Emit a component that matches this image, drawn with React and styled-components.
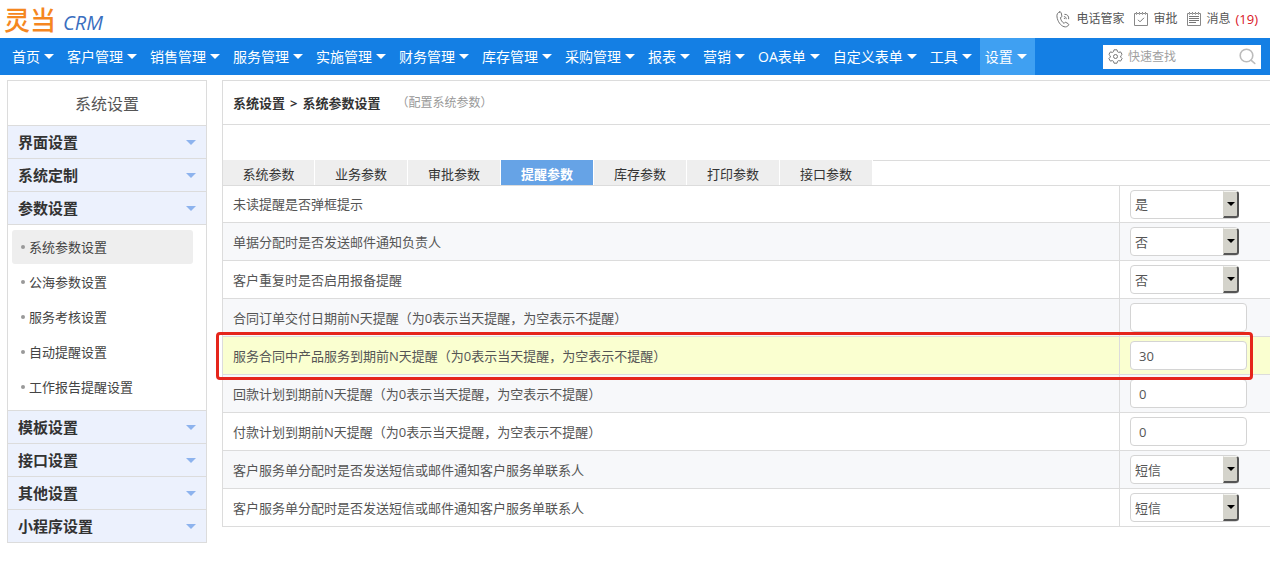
import React from "react";
import styled, { createGlobalStyle, css } from "styled-components";

const GlobalStyle = createGlobalStyle`
  *, *::before, *::after { box-sizing: border-box; }
  body {
    margin: 0;
    background: #fff;
    color: #555;
    font: 13px/20px "Open Sans", "Noto Sans CJK SC", sans-serif;
  }
  button, input, select { font: inherit; color: inherit; }
  a { color: inherit; text-decoration: none; }
`;

const line = "#dcdcdc";

const TopBar = styled.header`
  display: flex;
  align-items: center;
  justify-content: space-between;
  height: 38px;
  padding: 0 12px 0 4px;
`;

const Logo = styled.a`
  display: flex;
  align-items: baseline;
  height: 38px;
  font-size: 26px;
  line-height: 38px;
  font-weight: 500;
  font-family: "Noto Sans CJK SC", sans-serif;
  color: #f5871f;
`;

const LogoMark = styled.span`
  margin-left: 7px;
  font: italic 20px/20px "Open Sans", sans-serif;
  color: #3a6fc0;
`;

const QuickLinks = styled.nav`
  display: flex;
  gap: 10px;
  font-size: 12px;
`;

const QuickLink = styled.a`
  display: flex;
  align-items: center;
  gap: 5px;
`;

const Count = styled.span`
  font-size: 13px;
  color: #d9141e;
`;

const NavBar = styled.nav`
  display: flex;
  align-items: center;
  height: 37px;
  padding: 0 9px 0 7px;
  background: #147fe4;
`;

const NavItem = styled.button`
  display: flex;
  align-items: center;
  gap: 4px;
  height: 37px;
  padding: 0 8px 0 5px;
  border: 0;
  background: ${(p) => (p.$active ? "#3fa0f2" : "transparent")};
  color: #fff;
  font-size: 14px;
  line-height: 20px;
  white-space: nowrap;
`;

const Caret = styled.span`
  width: 0;
  height: 0;
  border: 5px solid transparent;
  border-bottom-width: 0;
  border-top-color: ${(p) => p.$color || "#fff"};
`;

const Search = styled.label`
  display: flex;
  align-items: center;
  gap: 5px;
  width: 158px;
  height: 24px;
  margin-left: auto;
  padding: 0 5px;
  background: #fff;
`;

const SearchInput = styled.input`
  flex: 1;
  min-width: 0;
  padding: 0;
  border: 0;
  outline: 0;
  background: none;
  font-size: 12px;
  &::placeholder { color: #a0a0a0; opacity: 1; }
`;

const Page = styled.div`
  display: flex;
  align-items: flex-start;
  gap: 15px;
  padding: 5px 0 19px 7px;
`;

const Sidebar = styled.aside`
  flex: 0 0 200px;
  border: 1px solid ${line};
`;

const SideTitle = styled.h1`
  margin: 0;
  padding: 13px 0 11px;
  font-size: 16px;
  line-height: 20px;
  font-weight: 400;
  text-align: center;
`;

const SideGroup = styled.button`
  display: flex;
  align-items: center;
  justify-content: space-between;
  width: 100%;
  height: 33px;
  padding: 0 10px;
  border: 0;
  border-top: 1px solid ${line};
  background: #ecf1fd;
  color: #333;
  font-size: 15px;
  line-height: 20px;
  font-weight: 700;
`;

const SubMenu = styled.ul`
  display: grid;
  gap: 1px;
  margin: 0;
  padding: 5px 13px 6px 4px;
  border-top: 1px solid ${line};
  list-style: none;
`;

const SubLink = styled.a`
  display: flex;
  align-items: center;
  gap: 4px;
  height: 34px;
  padding: 0 9px;
  border-radius: 3px;
  background: ${(p) => (p.$active ? "#eee" : "transparent")};
  color: #444;
  &::before {
    content: "";
    width: 4px;
    height: 4px;
    border-radius: 2px;
    background: #999;
  }
`;

const Main = styled.main`
  flex: 1;
  min-width: 0;
  border: solid ${line};
  border-width: 1px 0 0 1px;
`;

const Crumbs = styled.div`
  display: flex;
  align-items: center;
  gap: 5px;
  height: 44px;
  padding: 0 10px;
  border-bottom: 1px solid ${line};
  color: #333;
  font-weight: 700;
`;

const Hint = styled.span`
  margin-left: 11px;
  color: #999;
  font-size: 12px;
  font-weight: 400;
`;

const TabBar = styled.div`
  display: flex;
  margin-top: 35px;
  &::after {
    content: "";
    flex: 1;
    border-top: 1px solid ${line};
  }
`;

const Tab = styled.button`
  width: 93px;
  height: 25px;
  padding: 2px 0 0;
  border: 0;
  border-right: 1px solid #fff;
  background: #eee;
  color: #333;
  &:first-child { width: 92px; }
  ${(p) => p.$active && css`
    background: #66a3e6;
    color: #fff;
    font-weight: 700;
  `}
`;

const Settings = styled.table`
  width: 100%;
  border-collapse: separate;
  border-spacing: 0;
`;

const rowColor = (p) => (p.$marked ? "#faffd0" : p.$striped ? "#f7f8fa" : "#fff");

const Row = styled.tr`
  position: relative;
  background: ${rowColor};
  &:first-child > * { border-top: 1px solid ${line}; }
`;

const NameCell = styled.th`
  height: 38px;
  padding: 0 10px;
  border-bottom: 1px solid ${line};
  font-weight: 400;
  text-align: left;
`;

const ValueCell = styled.td`
  width: 151px;
  height: 38px;
  padding: 0 10px;
  border: solid ${line};
  border-width: 0 0 1px 1px;
`;

const field = css`
  display: block;
  height: 29px;
  border: 1px solid #d4d4d4;
  border-radius: 4px;
  background: #fff;
  color: #555;
`;

const TextField = styled.input`
  ${field}
  width: 117px;
  padding: 0 8px;
`;

const SelectBox = styled.div`
  position: relative;
  width: 109px;
`;

const SelectField = styled.select`
  ${field}
  width: 100%;
  padding: 0 20px 0 4px;
  appearance: none;
`;

const SelectArrow = styled.span`
  position: absolute;
  top: 1px;
  right: 0;
  bottom: 1px;
  display: grid;
  place-items: center;
  width: 16px;
  border: solid;
  border-width: 1px 2px 2px 1px;
  border-color: #f4f4f0 #555 #555 #d4d3cb;
  border-radius: 0 3px 3px 0;
  background: #d4d3cb;
  pointer-events: none;
  &::before {
    content: "";
    border: 4px solid transparent;
    border-top-color: #000;
    border-bottom-width: 0;
  }
`;

const Marker = styled.span`
  position: absolute;
  z-index: 1;
  inset: -5px 17px -5px -7px;
  border: 3px solid #e5251b;
  border-radius: 4px;
  pointer-events: none;
`;

const Icon = styled.svg`
  flex: none;
  fill: none;
  stroke: ${(p) => p.$color || "#777"};
`;

const PhoneIcon = () => (
  <Icon width="15" height="17" viewBox="0 0 15 17" strokeLinecap="round" strokeLinejoin="round">
    <path d="M3.500 1C1.500 1.600.6 3.400 1 6c.7 4.500 3.500 8.600 7 9.700 2 .600 3.800-.200 4.600-1.700.3-.6.1-1-.4-1.300l-2.300-1.300c-.6-.3-1-.1-1.300.3l-.5.7C6 11.200 4.700 8.800 4.400 6.500l.9-.3c.5-.2.7-.5.6-1.100L5.200 1.800C5 1.100 4.400.8 3.500 1Z" />
    <path d="M8.300 5.600c1.200 0 2 .9 1.900 2.200M8.800 3.300c2.400-.2 4.300 1.800 3.900 4.500M8.300 7.300l.2.400" />
  </Icon>
);

const NotepadFrame = () => (
  <>
    <path d="M.5 1.500h13v12H.5Z" stroke="#888" />
    <path d="M2.500 0v1M5.500 0v1M8.500 0v1M11.500 0v1" stroke="#888" />
    <path d="M2.500 1v2M5.500 1v2M8.500 1v2M11.500 1v2" stroke="#aaa" />
  </>
);

const ApproveIcon = () => (
  <Icon width="14" height="14" viewBox="0 0 14 14">
    <NotepadFrame />
    <path d="M4 7.800l2 2 4-4" />
  </Icon>
);

const MessageIcon = () => (
  <Icon width="14" height="14" viewBox="0 0 14 14">
    <NotepadFrame />
    <path d="M2 4.500h10M2 6.500h10M2 8.500h10M2 10.500h7" />
  </Icon>
);

const GearIcon = () => (
  <Icon width="15" height="15" viewBox="0 0 15 15" strokeLinejoin="round">
    <path d="M6 .8h3l.5 1.900 1.200.7 1.900-.5 1.500 2.600-1.400 1.400v1.200l1.400 1.400-1.500 2.600-1.900-.5-1.200.7-.5 1.900H6l-.5-1.900-1.200-.7-1.900.5L.9 9.500l1.400-1.400V6.900L.9 5.500l1.500-2.600 1.900.5 1.200-.7Z" />
    <circle cx="7.500" cy="7.500" r="2" />
  </Icon>
);

const LensIcon = () => (
  <Icon $color="#bbb" width="17" height="17" viewBox="0 0 17 17" strokeWidth="1.600" strokeLinecap="round">
    <circle cx="7.500" cy="7.500" r="6.300" />
    <path d="M12.300 12.300l3.500 3.200" />
  </Icon>
);

const menus = ["首页", "客户管理", "销售管理", "服务管理", "实施管理", "财务管理", "库存管理", "采购管理", "报表", "营销", "OA表单", "自定义表单", "工具", "设置"];

const groups = [
  { name: "界面设置" },
  { name: "系统定制" },
  { name: "参数设置", links: ["系统参数设置", "公海参数设置", "服务考核设置", "自动提醒设置", "工作报告提醒设置"] },
  { name: "模板设置" },
  { name: "接口设置" },
  { name: "其他设置" },
  { name: "小程序设置" },
];

const tabs = ["系统参数", "业务参数", "审批参数", "提醒参数", "库存参数", "打印参数", "接口参数"];

const settings = [
  { name: "未读提醒是否弹框提示", value: "是", options: ["是", "否"] },
  { name: "单据分配时是否发送邮件通知负责人", value: "否", options: ["是", "否"] },
  { name: "客户重复时是否启用报备提醒", value: "否", options: ["是", "否"] },
  { name: "合同订单交付日期前N天提醒（为0表示当天提醒，为空表示不提醒）", value: "" },
  { name: "服务合同中产品服务到期前N天提醒（为0表示当天提醒，为空表示不提醒）", value: "30", marked: true },
  { name: "回款计划到期前N天提醒（为0表示当天提醒，为空表示不提醒）", value: "0" },
  { name: "付款计划到期前N天提醒（为0表示当天提醒，为空表示不提醒）", value: "0" },
  { name: "客户服务单分配时是否发送短信或邮件通知客户服务单联系人", value: "短信", options: ["短信", "邮件"] },
  { name: "客户服务单分配时是否发送短信或邮件通知客户服务单联系人", value: "短信", options: ["短信", "邮件"] },
];

function SettingRow({ item, index }) {
  const id = `setting-${index}`;
  return (
    <Row $striped={index % 2 === 1} $marked={item.marked}>
      <NameCell scope="row">
        <label htmlFor={id}>{item.name}</label>
      </NameCell>
      <ValueCell>
        {item.options ? (
          <SelectBox>
            <SelectField id={id} defaultValue={item.value}>
              {item.options.map((o) => <option key={o}>{o}</option>)}
            </SelectField>
            <SelectArrow />
          </SelectBox>
        ) : (
          <TextField id={id} type="text" defaultValue={item.value} />
        )}
        {item.marked && <Marker />}
      </ValueCell>
    </Row>
  );
}

export default function App() {
  return (
    <>
      <GlobalStyle />
      <TopBar>
        <Logo href="#">灵当<LogoMark>CRM</LogoMark></Logo>
        <QuickLinks>
          <QuickLink href="#"><PhoneIcon />电话管家</QuickLink>
          <QuickLink href="#"><ApproveIcon />审批</QuickLink>
          <QuickLink href="#"><MessageIcon />消息<Count>(19)</Count></QuickLink>
        </QuickLinks>
      </TopBar>
      <NavBar>
        {menus.map((m) => (
          <NavItem key={m} type="button" $active={m === "设置"}>{m}<Caret /></NavItem>
        ))}
        <Search>
          <GearIcon />
          <SearchInput type="text" placeholder="快速查找" aria-label="快速查找" />
          <LensIcon />
        </Search>
      </NavBar>
      <Page>
        <Sidebar>
          <SideTitle>系统设置</SideTitle>
          {groups.map((g) => (
            <React.Fragment key={g.name}>
              <SideGroup type="button">{g.name}<Caret $color="#8db3ee" /></SideGroup>
              {g.links && (
                <SubMenu>
                  {g.links.map((l, i) => (
                    <li key={l}><SubLink href="#" $active={i === 0}>{l}</SubLink></li>
                  ))}
                </SubMenu>
              )}
            </React.Fragment>
          ))}
        </Sidebar>
        <Main>
          <Crumbs>
            <span>系统设置</span><span>&gt;</span><span>系统参数设置</span>
            <Hint>（配置系统参数）</Hint>
          </Crumbs>
          <TabBar>
            {tabs.map((t) => <Tab key={t} type="button" $active={t === "提醒参数"}>{t}</Tab>)}
          </TabBar>
          <Settings>
            <tbody>
              {settings.map((s, i) => <SettingRow key={i} item={s} index={i} />)}
            </tbody>
          </Settings>
        </Main>
      </Page>
    </>
  );
}
